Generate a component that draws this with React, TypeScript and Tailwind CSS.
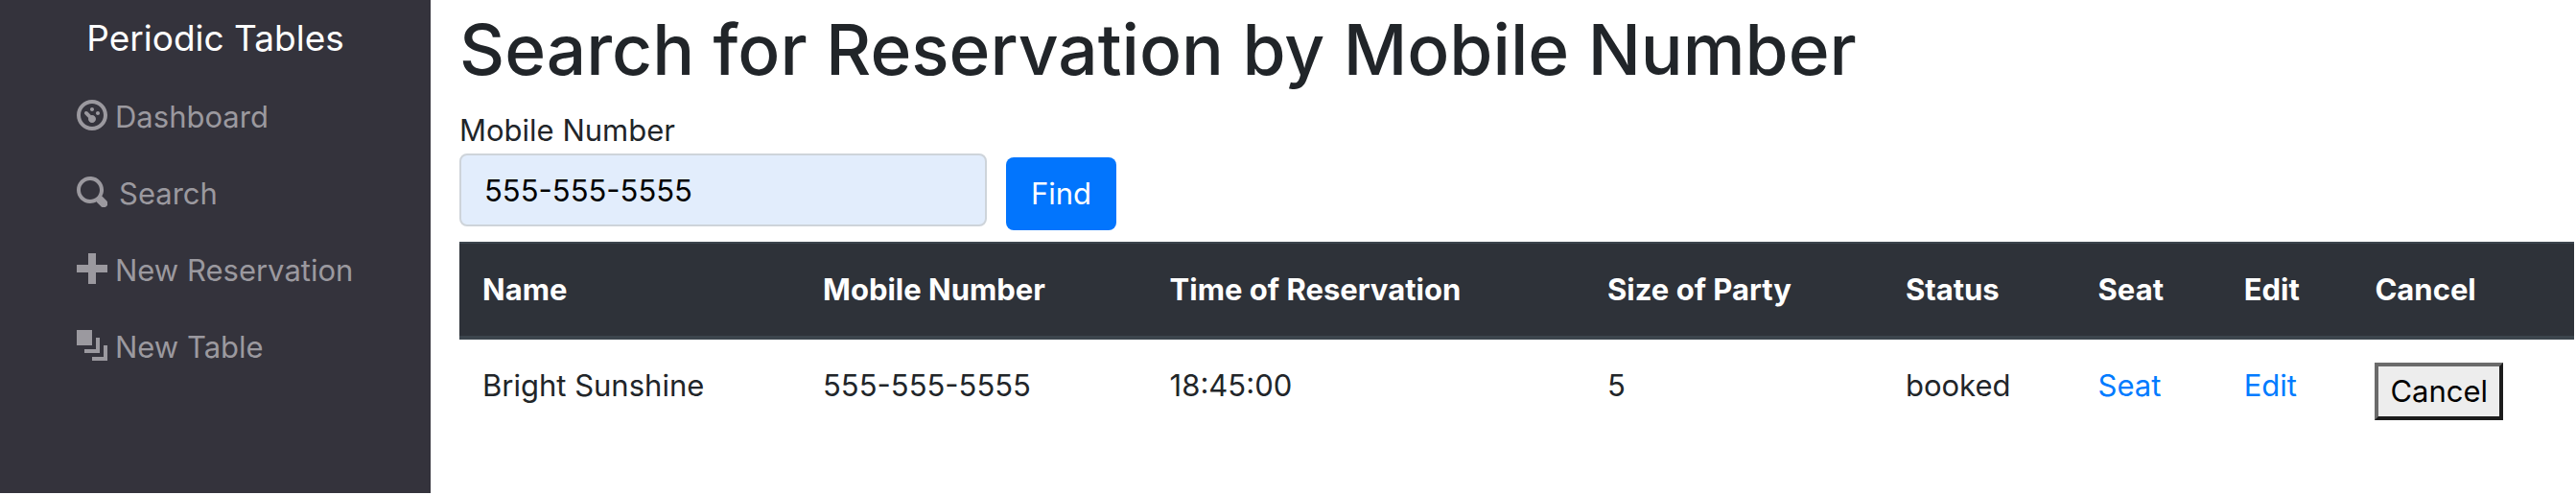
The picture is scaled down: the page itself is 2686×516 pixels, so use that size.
import React from "react";

const ICONS = {
  dashboard:
    "M4 0c-2.2 0-4 1.8-4 4s1.8 4 4 4 4-1.8 4-4-1.8-4-4-4zm0 1c1.66 0 3 1.34 3 3s-1.34 3-3 3-3-1.34-3-3 1.34-3 3-3zm0 1c-.28 0-.5.22-.5.5s.22.5.5.5.5-.22.5-.5-.22-.5-.5-.5zm-1.66 1a.5.5 0 0 0-.19.84l.91.91c-.02.08-.06.16-.06.25 0 .55.45 1 1 1s1-.45 1-1-.45-1-1-1c-.09 0-.17.04-.25.06l-.91-.91a.5.5 0 0 0-.44-.16.5.5 0 0 0-.06 0zm3.16 0c-.28 0-.5.22-.5.5s.22.5.5.5.5-.22.5-.5-.22-.5-.5-.5z",
  search:
    "M3.5 0c-1.93 0-3.5 1.57-3.5 3.5s1.57 3.5 3.5 3.5c.59 0 1.17-.14 1.66-.41a1 1 0 0 0 .13.13l1 1a1.02 1.02 0 1 0 1.44-1.44l-1-1a1 1 0 0 0-.16-.13c.27-.49.44-1.06.44-1.66 0-1.93-1.55-3.5-3.5-3.5zm0 1c1.39 0 2.5 1.11 2.5 2.5 0 .66-.24 1.27-.66 1.72l-.03.03a1 1 0 0 0-.13.13c-.44.4-1.04.63-1.69.63-1.39 0-2.5-1.11-2.5-2.5s1.11-2.5 2.5-2.5z",
  plus: "M3 0v3h-3v2h3v3h2v-3h3v-2h-3v-3h-2z",
  layers: "M0 0v4h4v-4h-4zm5 2v3h-3v1h4v-4h-1zm2 2v3h-3v1h4v-4h-1z",
};

function Icon({ name }: { name: keyof typeof ICONS }) {
  return (
    <svg viewBox="0 0 8 8" className="size-8 shrink-0 fill-current" aria-hidden="true">
      <path d={ICONS[name]} />
    </svg>
  );
}

function NavItem({ icon, gap, children }: { icon: keyof typeof ICONS; gap: string; children: React.ReactNode }) {
  return (
    <li>
      <a href="#" className={`flex h-20 items-center ${gap}`}>
        <Icon name={icon} />
        <span className="pt-1">{children}</span>
      </a>
    </li>
  );
}

const COLUMNS = [
  { label: "Name", width: "w-[16.1%]" },
  { label: "Mobile Number", width: "w-[16.4%]" },
  { label: "Time of Reservation", width: "w-[20.7%]" },
  { label: "Size of Party", width: "w-[14.1%]" },
  { label: "Status", width: "w-[9.1%]" },
  { label: "Seat", width: "w-[6.9%]" },
  { label: "Edit", width: "w-[6.2%]" },
  { label: "Cancel", width: "" },
];

export default function App() {
  return (
    <div className="flex min-h-screen bg-white pb-[2px] font-['Inter',sans-serif] text-[31px] leading-12 text-[#212529]">
      <nav className="w-[449px] shrink-0 bg-[#34333c] text-[#9b999f]">
        <a href="#" className="flex h-20 items-center justify-center text-[37px] text-white">
          Periodic Tables
        </a>
        <ul className="pl-20">
          <NavItem icon="dashboard" gap="gap-2">Dashboard</NavItem>
          <NavItem icon="search" gap="gap-3">Search</NavItem>
          <NavItem icon="plus" gap="gap-2">New Reservation</NavItem>
          <NavItem icon="layers" gap="gap-2">New Table</NavItem>
        </ul>
      </nav>
      <main className="min-w-0 grow pr-[2px] pl-[30px]">
        <h1 className="mb-3 pt-1 text-[73px] leading-24 font-medium">Search for Reservation by Mobile Number</h1>
        <form className="mb-3 flex items-end gap-5" onSubmit={(e) => e.preventDefault()}>
          <div className="mb-1 flex w-[550px] flex-col">
            <label htmlFor="mobile">Mobile Number</label>
            <input
              id="mobile"
              type="text"
              defaultValue="555-555-5555"
              className="h-[76px] rounded-lg border-2 border-[#ced4da] bg-[#e2edfc] px-6 text-black"
            />
          </div>
          <button type="submit" className="h-[76px] rounded-lg bg-[#0275fd] px-[26px] text-white">
            Find
          </button>
        </form>
        <table className="w-full table-fixed text-left">
          <thead className="bg-[#2e3239] text-white">
            <tr>
              {COLUMNS.map((c) => (
                <th
                  key={c.label}
                  scope="col"
                  className={`${c.width} border-t-2 border-b-4 border-[#3c454d] p-6 font-bold`}
                >
                  {c.label}
                </th>
              ))}
            </tr>
          </thead>
          <tbody>
            <tr className="align-top">
              <td className="p-6">Bright Sunshine</td>
              <td className="p-6">555-555-5555</td>
              <td className="p-6">18:45:00</td>
              <td className="p-6">5</td>
              <td className="p-6">booked</td>
              <td className="p-6"><a href="#" className="text-[#007bff]">Seat</a></td>
              <td className="p-6"><a href="#" className="text-[#007bff]">Edit</a></td>
              <td className="p-6">
                <button
                  type="button"
                  className="block border-4 border-t-[#6b6b6b] border-r-[#1c1c1c] border-b-[#1c1c1c] border-l-[#6b6b6b] bg-[#ededed] px-3 py-[2px] text-black"
                >
                  Cancel
                </button>
              </td>
            </tr>
          </tbody>
        </table>
      </main>
    </div>
  );
}
